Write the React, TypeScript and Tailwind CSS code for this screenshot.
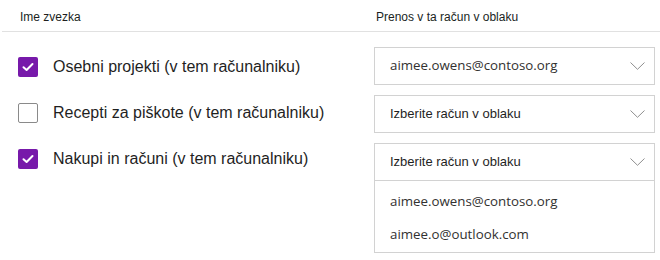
import React from "react";

const Chevron = () => (
  <svg width="15" height="8" viewBox="0 0 15 8" className="shrink-0">
    <polyline points="0.5,0.5 7.5,7.3 14.5,0.5" fill="none" stroke="#8f8f8f" strokeWidth="1" />
  </svg>
);

const Check = ({ checked }: { checked: boolean }) =>
  checked ? (
    <div className="w-[20px] h-[20px] rounded-[2px] bg-[#7719aa] flex items-center justify-center shrink-0">
      <svg width="12" height="10" viewBox="0 0 12 10">
        <polyline points="1.5,5.2 4.6,8 10.5,2" fill="none" stroke="#ffffff" strokeWidth="2" strokeLinecap="round" strokeLinejoin="round" />
      </svg>
    </div>
  ) : (
    <div className="w-[20px] h-[20px] rounded-[2px] border border-[#8a8a8a] bg-white shrink-0" />
  );

const rows = [
  { label: "Osebni projekti (v tem računalniku)", checked: true },
  { label: "Recepti za piškote (v tem računalniku)", checked: false },
  { label: "Nakupi in računi (v tem računalniku)", checked: true },
];

export default function App() {
  const arial = { fontFamily: '"Liberation Sans", Arial, sans-serif' };
  const segoe = { fontFamily: '"Open Sans", "Noto Sans", sans-serif' };
  return (
    <div className="w-[660px] h-[260px] bg-white text-[#1f1f1f] overflow-hidden" style={arial}>
      <div className="ml-[2px] h-[32px] border-b border-[#e1e1e1] flex text-[12px] leading-[14px] text-[#201f1e]">
        <div className="w-[372px] pl-[18px] pt-[10px]">Ime zvezka</div>
        <div className="pt-[10px] pl-[2px]">Prenos v ta račun v oblaku</div>
      </div>
      <div className="flex">
        <div className="w-[374px] pl-[18px] pt-[25px] flex flex-col gap-[26px]">
          {rows.map((r) => (
            <div key={r.label} className="h-[20px] flex items-center gap-[15px]">
              <Check checked={r.checked} />
              <span className="text-[16px] leading-[20px] text-[#1f1f1f] whitespace-nowrap">{r.label}</span>
            </div>
          ))}
        </div>
        <div className="w-[281px] pt-[15px] flex flex-col gap-[10px]">
          <div className="h-[38px] border border-[#d2d2d2] flex items-center justify-between pl-[15px] pr-[9px]">
            <span className="text-[13.3px] text-[#323130]" style={segoe}>aimee.owens@contoso.org</span>
            <Chevron />
          </div>
          <div className="h-[38px] border border-[#d2d2d2] flex items-center justify-between pl-[15px] pr-[9px]">
            <span className="text-[13px] text-[#1f1f1f]">Izberite račun v oblaku</span>
            <Chevron />
          </div>
          <div className="flex flex-col">
            <div className="h-[38px] border border-[#d2d2d2] flex items-center justify-between pl-[15px] pr-[9px]">
              <span className="text-[13px] text-[#1f1f1f]">Izberite račun v oblaku</span>
              <Chevron />
            </div>
            <div className="border border-t-0 border-[#d2d2d2] pt-[4px] pb-[1px] flex flex-col" style={segoe}>
              <div className="h-[33px] flex items-center pl-[15px] text-[13.3px] text-[#323130]">aimee.owens@contoso.org</div>
              <div className="h-[33px] flex items-center pl-[15px] text-[13.3px] text-[#323130]">aimee.o@outlook.com</div>
            </div>
          </div>
        </div>
      </div>
    </div>
  );
}
